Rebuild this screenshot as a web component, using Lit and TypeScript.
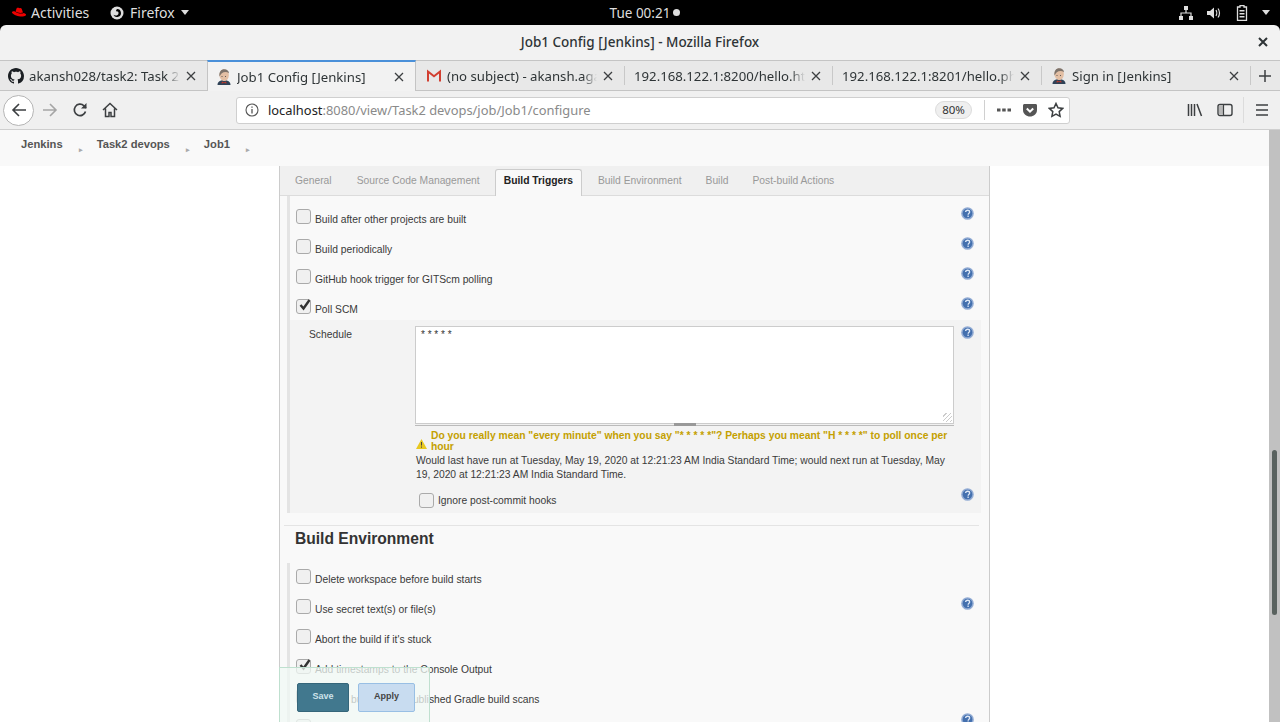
import { LitElement, html, css, svg } from 'lit';
import { customElement } from 'lit/decorators.js';

const jenkinsFace = html`<svg class="fav" viewBox="0 0 16 16">
  <path d="M1.500 16c0-3 2-4.800 6.500-4.800s6.500 1.800 6.500 4.800z" fill="#2f4257"/>
  <path d="M3.500 6c0-3.500 2-5.500 4.800-5.500S13 3 12.800 6.500c-.2 3-2 5.500-4.500 5.500S3.500 9.500 3.500 6z" fill="#e3bfa4"/>
  <path d="M3.500 7.500C2.800 3 5 .3 8.300.3c2.800 0 4.500 1.700 4.700 3.900-2-1.700-5-1.700-7.200 0-.9.900-1.600 2-2.300 3.300z" fill="#7d736b"/>
  <path d="M6 12.500l2 1 2-1 .6 2-2.600-.6-2.600.6z" fill="#c0392b"/>
  <path d="M5.500 7.500h1M9 7.500h1" stroke="#444" stroke-width=".8"/>
</svg>`;

const githubMark = html`<svg class="fav" viewBox="0 0 16 16"><path fill="#1b1f23" d="M8 0C3.580 0 0 3.580 0 8c0 3.540 2.290 6.530 5.470 7.590.4.070.55-.17.55-.38 0-.19-.01-.82-.01-1.490-2.010.37-2.530-.49-2.690-.94-.09-.23-.48-.94-.82-1.130-.28-.15-.68-.52-.01-.53.63-.01 1.080.58 1.230.82.72 1.210 1.870.87 2.330.66.070-.52.280-.87.510-1.070-1.780-.2-3.640-.89-3.640-3.950 0-.87.310-1.590.820-2.150-.08-.2-.36-1.020.08-2.120 0 0 .67-.21 2.200.82.640-.18 1.320-.27 2-.27s1.360.09 2 .27c1.530-1.040 2.200-.82 2.200-.82.440 1.100.160 1.920.080 2.120.510.560.820 1.270.820 2.150 0 3.070-1.870 3.750-3.650 3.950.290.250.540.730.540 1.480 0 1.070-.01 1.930-.01 2.200 0 .210.150.460.550.380A8.010 8.010 0 0 0 16 8c0-4.420-3.580-8-8-8z"/></svg>`;

const gmailMark = html`<svg class="fav" viewBox="0 0 16 16"><path d="M2 13.500V3.500l6 4.800 6-4.800v10" fill="none" stroke="#d23f31" stroke-width="2"/></svg>`;

const tabs = [
  { label: 'akansh028/task2: Task 2', icon: githubMark, width: 207 },
  { label: 'Job1 Config [Jenkins]', icon: jenkinsFace, width: 209, active: true },
  { label: '(no subject) - akansh.agarwal', icon: gmailMark, width: 208 },
  { label: '192.168.122.1:8200/hello.html', width: 208 },
  { label: '192.168.122.1:8201/hello.php', width: 209 },
  { label: 'Sign in [Jenkins]', icon: jenkinsFace, width: 209 },
];

const configTabs = ['General', 'Source Code Management', 'Build Triggers', 'Build Environment', 'Build', 'Post-build Actions'];

const triggers = [
  { label: 'Build after other projects are built', help: true },
  { label: 'Build periodically', help: true },
  { label: 'GitHub hook trigger for GITScm polling', help: true },
  { label: 'Poll SCM', help: true, checked: true },
];

const environment = [
  { label: 'Delete workspace before build starts' },
  { label: 'Use secret text(s) or file(s)', help: true },
  { label: "Abort the build if it's stuck" },
  { label: 'Add timestamps to the Console Output', checked: true },
  { label: 'Inspect build log for published Gradle build scans' },
  { label: 'With Ant', help: true, last: true },
];

const helpIcon = html`<svg class="help" viewBox="0 0 14 14">
  <circle cx="7" cy="7" r="6.800" fill="#93acd4"/>
  <circle cx="7" cy="7" r="5.200" fill="#4470ae"/>
  <path d="M5 5.500C5 4 6 3.500 7.200 3.500 8.500 3.500 9.300 4.300 9.300 5.300c0 1.400-1.600 1.400-1.600 3" fill="none" stroke="#dfe8f6" stroke-width="1.400"/>
  <rect x="6.900" y="9.200" width="1.500" height="1.500" fill="#dfe8f6"/>
</svg>`;

const closeX = svg`<path d="M1 1l8 8M9 1l-8 8" stroke="currentColor" stroke-width="1.300" fill="none"/>`;

@customElement('app-root')
export class AppRoot extends LitElement {
  static styles = css`
    :host {
      display: block;
      height: 722px;
      overflow: hidden;
      background: #000;
      font-family: 'Noto Sans', sans-serif;
    }

    .topbar {
      height: 25px;
      background: #000;
      color: #dedede;
      font-size: 13.500px;
      display: grid;
      grid-template-columns: 1fr auto 1fr;
      align-items: center;
    }
    .topbar .left, .topbar .right { display: flex; align-items: center; }
    .topbar .left { font-size: 14px; }
    .topbar .right { justify-content: flex-end; }
    .topbar .clock { display: flex; align-items: center; gap: 3px; margin-left: 10px; }
    .dot { width: 7px; height: 7px; border-radius: 50%; background: #dedede; }
    .hat { width: 16px; height: 11px; margin: 0 4px 0 11px; }
    .activities { width: 79px; }
    .ff-logo { width: 14px; height: 14px; margin-right: 6px; }
    .caret { width: 0; height: 0; border: 4px solid transparent; border-top: 5px solid #dedede; border-bottom: 0; margin-left: 6px; }
    .tray { width: 16px; height: 16px; margin-right: 12px; }
    .tray-caret { margin: 0 10px 0 0; }

    .titlebar {
      height: 35px;
      box-sizing: border-box;
      padding-bottom: 2px;
      background: #f2f2f2;
      border-radius: 6px 6px 0 0;
      display: grid;
      grid-template-columns: 1fr auto 1fr;
      align-items: center;
      font-size: 13.500px;
      font-weight: 500;
      color: #2e3436;
    }
    .titlebar .win-close { justify-self: end; width: 10px; height: 10px; margin-right: 12px; color: #2e3436; }
    .titlebar .win-close path { stroke-width: 2; }

    .tabstrip {
      height: 31px;
      box-sizing: border-box;
      display: flex;
      background: #e8e8e8;
      border-top: 1px solid #c4c4c4;
      border-bottom: 1px solid #c4c4c4;
      color: #2e3436;
      font-size: 13.200px;
    }
    .tab {
      box-sizing: border-box;
      display: flex;
      align-items: center;
      padding: 0 7px 0 10px;
      position: relative;
    }
    .tab:first-child { padding-left: 8px; }
    .tab + .tab:not(.active):not(.after-active)::before {
      content: '';
      position: absolute;
      left: 0;
      top: 5px;
      bottom: 5px;
      width: 1px;
      background: #c8c8c8;
    }
    .tab.active {
      background: #f2f2f2;
      border-top: 2px solid #4a90d9;
      border-left: 1px solid #c4c4c4;
      border-right: 1px solid #c4c4c4;
      margin-top: -1px;
      margin-bottom: -1px;
      padding-left: 8px;
    }
    .fav { width: 16px; height: 16px; flex: none; margin-right: 5px; }
    .tab .label {
      flex: 1;
      min-width: 0;
      overflow: hidden;
      white-space: nowrap;
      -webkit-mask-image: linear-gradient(to left, transparent 0, #000 14px);
      mask-image: linear-gradient(to left, transparent 0, #000 14px);
    }
    .tab .x { width: 10px; height: 10px; margin: 0 4px 0 6px; color: #3c3f41; flex: none; }
    .newtab { flex: 1; display: flex; align-items: center; justify-content: center; position: relative; }
    .newtab::before { content: ''; position: absolute; left: 0; top: 5px; bottom: 5px; width: 1px; background: #c8c8c8; }

    .toolbar {
      height: 39px;
      box-sizing: border-box;
      background: #f0f0f0;
      border-bottom: 1px solid #cfcfcf;
      display: flex;
      align-items: center;
      color: #3c3f41;
    }
    .backbtn {
      width: 31px;
      height: 31px;
      box-sizing: border-box;
      border-radius: 50%;
      background: #fff;
      border: 1px solid #b5b5b5;
      margin-left: 3px;
      display: flex;
      align-items: center;
      justify-content: center;
    }
    .tb-icon { width: 16px; height: 16px; flex: none; }
    .urlbar {
      width: 834px;
      height: 27px;
      box-sizing: border-box;
      background: #fff;
      border: 1px solid #cfcfcf;
      border-radius: 3px;
      display: flex;
      align-items: center;
      font-size: 12.900px;
      color: #8a8a8a;
      margin-left: 118px;
      padding-left: 8px;
    }
    .urlbar .host { color: #222; }
    .urlbar .addr { flex: 1; margin-left: 9px; white-space: nowrap; }
    .zoom {
      width: 37px;
      height: 18px;
      box-sizing: border-box;
      border-radius: 9px;
      background: #efefef;
      border: 1px solid #dcdcdc;
      color: #333;
      font-size: 11.500px;
      text-align: center;
      line-height: 16px;
      margin-right: 12px;
    }
    .vsep { width: 1px; height: 20px; background: #d0d0d0; flex: none; }
    .pageactions { display: flex; align-items: center; gap: 10px; padding: 0 5px 0 11px; }

    .viewport { display: flex; height: 592px; }
    .content { flex: 1; min-width: 0; }

    .breadcrumbs {
      height: 36px;
      box-sizing: border-box;
      background: #f9f9f9;
      display: flex;
      align-items: center;
      padding: 0 0 8px 21px;
      font: bold 11.200px 'Liberation Sans', Arial, sans-serif;
      color: #555;
    }
    .breadcrumbs .sep { color: #aaa; font-size: 7px; margin: 11px 14px 0 16px; }

    .page { height: 556px; background: #fff; overflow: hidden; position: relative; padding-left: 279px; }
    .scrollbar { width: 11px; background: #c1c1c1; position: relative; }
    .thumb { position: absolute; top: 320px; left: 3px; right: 3px; height: 165px; background: #59625f; border-radius: 3px; }

    .panel {
      width: 711px;
      box-sizing: border-box;
      background: #f9f9f9;
      border-left: 1px solid #ccc;
      border-right: 1px solid #ccc;
      font: 10.300px 'Liberation Sans', Arial, sans-serif;
      color: #3a3a3a;
      height: 100%;
    }
    .cfgtabs {
      height: 30px;
      box-sizing: border-box;
      background: #f0f0f0;
      border-bottom: 1px solid #dcdcdc;
      display: flex;
      align-items: flex-end;
      padding-left: 6px;
      color: #999;
    }
    .cfgtab {
      padding: 0 8px;
      margin-right: 6px;
      height: 27px;
      line-height: 22px;
      box-sizing: border-box;
      margin-bottom: -1px;
      border: 1px solid transparent;
      border-bottom: 0;
    }
    .cfgtab:first-child { margin-right: 7px; }
    .cfgtab.on { background: #f9f9f9; border-color: #ccc; border-radius: 3px 3px 0 0; color: #222; font-weight: bold; margin-right: 7px; }

    .section { margin-left: 7px; border-left: 3px solid #e4e4e4; padding-top: 7px; box-sizing: border-box; }
    .section.env { padding-top: 0; }
    .row { height: 30px; box-sizing: border-box; display: flex; padding: 6px 0 0 6px; position: relative; }
    .box {
      width: 15px;
      height: 15px;
      box-sizing: border-box;
      background: #f0f0f0;
      border: 1px solid #aaa;
      border-radius: 3px;
      flex: none;
      position: relative;
    }
    .box svg { position: absolute; left: 1px; top: -2px; width: 14px; height: 14px; }
    .row .text { margin: 5px 0 0 4px; line-height: 12px; white-space: nowrap; }
    .row .help { position: absolute; left: 671px; top: 4px; }
    .help { width: 13px; height: 13px; }
    .row.last .help { top: 0; }

    .nested { background: #f3f3f3; margin-right: 8px; height: 193px; margin-top: -3px; display: flex; padding: 6px 0 0 0; box-sizing: border-box; position: relative; }
    .nested .name { width: 125px; padding: 3px 0 0 19px; box-sizing: border-box; }
    .nested > .help { position: absolute; left: 671px; top: 6px; }
    .nested .body { width: 539px; }
    .sched {
      height: 97px;
      box-sizing: border-box;
      background: #fff;
      border: 1px solid #ccc;
      border-bottom: 0;
      font: 10px 'Liberation Sans', Arial, sans-serif;
      line-height: 13px;
      padding: 1px 5px;
      color: #333;
      position: relative;
    }
    .grip { position: absolute; right: 1px; bottom: 1px; width: 9px; height: 9px; background: repeating-linear-gradient(135deg, transparent 0 2px, #ccc 2px 3px); }
    .handle { height: 3px; box-sizing: border-box; background: #f0f0f0; border-bottom: 1px solid #bbb; display: flex; justify-content: center; border-top: 1px solid #ccc; }
    .handle i { width: 22px; height: 3px; background: #999; margin-top: -1px; }
    .warn { color: #c4a000; font-weight: bold; margin: 4px 0 0 1px; line-height: 11px; display: flex; align-items: center; gap: 4px; }
    .warn svg { width: 11px; height: 10px; flex: none; margin-top: 5px; }
    .info { margin: 2px 0 0 1px; line-height: 14px; }
    .ignore { display: flex; margin: 11px 0 0 4px; }
    .ignore .text { margin: 2px 0 0 4px; line-height: 12px; }
    .ignore-help { position: absolute; left: 671px; top: 168px; }

    .rule { border-top: 1px solid #e4e4e4; margin: 12px 10px 0 4px; }
    h2 { font: bold 15.600px 'Liberation Sans', Arial, sans-serif; color: #333; margin: 4px 0 15px 15px; line-height: 18px; }

    .savebar {
      position: absolute;
      left: 279px;
      top: 501px;
      width: 151px;
      height: 60px;
      box-sizing: border-box;
      background: rgba(240, 248, 244, 0.75);
      border: 1px solid #bfe0cf;
      padding: 15px 0 0 17px;
      display: flex;
      gap: 9px;
      font: bold 9px 'Liberation Sans', Arial, sans-serif;
    }
    .savebar button { height: 29px; box-sizing: border-box; font: inherit; border-radius: 2px; padding: 0 0 4px; }
    .save { width: 52px; background: #41788e; color: #cfe3ea; border: 1px solid #35667a; }
    .apply { width: 57px; background: #c8dcf0; color: #444; border: 1px solid #98bfe4; }
  `;

  renderRow(r: { label: string; help?: boolean; checked?: boolean; last?: boolean }) {
    return html`<div class="row ${r.last ? 'last' : ''}">
      ${this.renderBox(r.checked)}
      <span class="text">${r.label}</span>
      ${r.help ? helpIcon : ''}
    </div>`;
  }

  renderBox(checked?: boolean) {
    return html`<span class="box">${checked
      ? html`<svg viewBox="0 0 14 14"><path d="M2.500 7l3 3.500L11.500 2" fill="none" stroke="#333" stroke-width="2.400"/></svg>`
      : ''}</span>`;
  }

  renderTopbar() {
    return html`<div class="topbar">
      <div class="left">
        <svg class="hat" viewBox="0 0 18 12"><path d="M5 5l1.500-4c1-.6 2-.2 3 .1 1-.3 2-.3 2.500.6L13.500 6C11 7 7.500 6.500 5 5z" fill="#e00"/><path d="M1 6c0-1 1-1.500 3-1.500C7 7 12 8 14.500 6.500 17 7.500 17.500 8.500 16.500 9.500 13 12 4 10 1 6z" fill="#e00"/></svg>
        <span class="activities">Activities</span>
        <svg class="ff-logo" viewBox="0 0 14 14"><circle cx="7" cy="7" r="6.500" fill="#dedede"/><path d="M7 3a4 4 0 1 1-3.600 5.800C5 10 8 10 8.500 7.500 8.800 6 7.500 5 6 5.500 6 4.500 6.500 3.500 7 3z" fill="#000"/></svg>
        <span>Firefox</span><span class="caret"></span>
      </div>
      <div class="clock">Tue 00:21 <span class="dot"></span></div>
      <div class="right">
        <svg class="tray" viewBox="0 0 16 16"><path d="M6 1h4v4H6zM1 11h4v4H1zM11 11h4v4h-4z" fill="#dedede"/><path d="M8 5v3M3 11V8h10v3" fill="none" stroke="#dedede" stroke-width="1.200"/></svg>
        <svg class="tray" viewBox="0 0 16 16"><path d="M1 6h3l4-3.500v11L4 10H1z" fill="#dedede"/><path d="M10 5c1 1.500 1 4.500 0 6M12 3.500c2 2.500 2 6.500 0 9" fill="none" stroke="#dedede" stroke-width="1.200"/></svg>
        <svg class="tray" viewBox="0 0 16 16"><path d="M6 .5h4V2h2.500v13.500h-9V2H6z" fill="none" stroke="#dedede" stroke-width="1.300"/><path d="M5.500 5h5v1.500h-5zM5.500 8h5v1.500h-5zM5.500 11h5v1.500h-5z" fill="#dedede"/></svg>
        <span class="caret tray-caret"></span>
      </div>
    </div>`;
  }

  renderTabs() {
    return html`<div class="tabstrip">
      ${tabs.map((t, i) => html`<div
        class="tab ${t.active ? 'active' : ''} ${i > 0 && tabs[i - 1].active ? 'after-active' : ''}"
        style="width:${t.width}px"
      >
        ${t.icon ?? ''}
        <span class="label">${t.label}</span>
        <svg class="x" viewBox="0 0 10 10">${closeX}</svg>
      </div>`)}
      <div class="newtab">
        <svg class="tb-icon" viewBox="0 0 16 16"><path d="M8 2v12M2 8h12" stroke="#3c3f41" stroke-width="1.500"/></svg>
      </div>
    </div>`;
  }

  renderToolbar() {
    return html`<div class="toolbar">
      <div class="backbtn">
        <svg class="tb-icon" viewBox="0 0 16 16"><path d="M15 8H2M8 2L2 8l6 6" fill="none" stroke="#3c3f41" stroke-width="1.600"/></svg>
      </div>
      <svg class="tb-icon" style="margin-left:8px" viewBox="0 0 16 16"><path d="M1 8h13M8 2l6 6-6 6" fill="none" stroke="#a5a5a5" stroke-width="1.600"/></svg>
      <svg class="tb-icon" style="margin-left:14px" viewBox="0 0 16 16"><path d="M13.500 9.500A5.700 5.700 0 1 1 12 3.800L14 6" fill="none" stroke="#3c3f41" stroke-width="1.700"/><path d="M14.500 1v5.500H9z" fill="#3c3f41"/></svg>
      <svg class="tb-icon" style="margin-left:14px" viewBox="0 0 16 16"><path d="M1 8l7-6.500L15 8M3.500 6.500V14.500h3.500v-4h2v4h3.500V6.500" fill="none" stroke="#3c3f41" stroke-width="1.500"/></svg>
      <div class="urlbar">
        <svg class="tb-icon" style="width:14px;height:14px" viewBox="0 0 14 14"><circle cx="7" cy="7" r="6" fill="none" stroke="#555" stroke-width="1.100"/><path d="M7 6v4.500M7 3.500v1.300" stroke="#555" stroke-width="1.300"/></svg>
        <span class="addr"><span class="host">localhost</span>:8080/view/Task2 devops/job/Job1/configure</span>
        <span class="zoom">80%</span>
        <span class="vsep"></span>
        <div class="pageactions">
          <svg class="tb-icon" viewBox="0 0 16 16"><path d="M1 6.500h3.500V9.500H1zM6.200 6.500h3.500V9.500H6.200zM11.500 6.500H15V9.500h-3.500z" fill="#555"/></svg>
          <svg class="tb-icon" viewBox="0 0 16 16"><path d="M1 3.500C1 2.500 1.800 2 2.500 2h11c.8 0 1.500.5 1.500 1.500V8c0 4-3.500 6.500-7 6.500S1 12 1 8z" fill="#555"/><path d="M4.800 6.500L8 9.700l3.200-3.200" fill="none" stroke="#fff" stroke-width="2"/></svg>
          <svg class="tb-icon" viewBox="0 0 16 16"><path d="M8 1.500l2 4.300 4.700.6-3.500 3.200.9 4.700L8 12l-4.100 2.300.9-4.700L1.300 6.400 6 5.800z" fill="none" stroke="#3c3f41" stroke-width="1.500"/></svg>
        </div>
      </div>
      <svg class="tb-icon" style="margin-left:117px" viewBox="0 0 16 16"><path d="M1.500 2v12M4.500 2v12M7.500 2v12M10 2l4.500 12" fill="none" stroke="#3c3f41" stroke-width="1.500"/></svg>
      <svg class="tb-icon" style="margin-left:14px" viewBox="0 0 16 16"><rect x="1" y="2.500" width="14" height="11" rx="2" fill="none" stroke="#3c3f41" stroke-width="1.400"/><path d="M2 3.500h4.500v9H2z" fill="#b8b8b8"/><path d="M6.500 3v10" stroke="#3c3f41" stroke-width="1.200"/></svg>
      <span class="vsep" style="margin-left:10px;height:26px;background:#dcdcdc"></span>
      <svg class="tb-icon" style="margin-left:10px" viewBox="0 0 16 16"><path d="M2 3h12M2 8h12M2 13h12" stroke="#3c3f41" stroke-width="1.600"/></svg>
    </div>`;
  }

  renderSchedule() {
    return html`<div class="nested">
      <div class="name">Schedule</div>
      <div class="body">
        <div class="sched">* * * * *<span class="grip"></span></div>
        <div class="handle"><i></i></div>
        <div class="warn">
          <svg viewBox="0 0 11 10"><path d="M5.500 0L11 10H0z" fill="#e8c820"/><path d="M5.500 3v3.500M5.500 7.500v1.200" stroke="#444" stroke-width="1"/></svg>
          <span>Do you really mean "every minute" when you say "* * * * *"? Perhaps you meant "H * * * *" to poll once per hour</span>
        </div>
        <div class="info">Would last have run at Tuesday, May 19, 2020 at 12:21:23 AM India Standard Time; would next run at Tuesday, May 19, 2020 at 12:21:23 AM India Standard Time.</div>
        <div class="ignore">${this.renderBox()}<span class="text">Ignore post-commit hooks</span></div>
      </div>
      ${helpIcon}
      <span class="ignore-help">${helpIcon}</span>
    </div>`;
  }

  render() {
    return html`
      ${this.renderTopbar()}
      <div class="titlebar">
        <span></span>
        <span>Job1 Config [Jenkins] - Mozilla Firefox</span>
        <svg class="win-close" viewBox="0 0 10 10">${closeX}</svg>
      </div>
      ${this.renderTabs()}
      ${this.renderToolbar()}
      <div class="viewport">
        <div class="content">
          <div class="breadcrumbs">
            Jenkins<span class="sep">▸</span>Task2 devops<span class="sep">▸</span>Job1<span class="sep">▸</span>
          </div>
          <div class="page">
            <div class="panel">
              <div class="cfgtabs">
                ${configTabs.map((t) => html`<div class="cfgtab ${t === 'Build Triggers' ? 'on' : ''}">${t}</div>`)}
              </div>
              <div class="section">
                ${triggers.map((r) => this.renderRow(r))}
                ${this.renderSchedule()}
              </div>
              <div class="rule"></div>
              <h2>Build Environment</h2>
              <div class="section env">
                ${environment.map((r) => this.renderRow(r))}
              </div>
            </div>
            <div class="savebar">
              <button class="save">Save</button>
              <button class="apply">Apply</button>
            </div>
          </div>
        </div>
        <div class="scrollbar"><div class="thumb"></div></div>
      </div>
    `;
  }
}
